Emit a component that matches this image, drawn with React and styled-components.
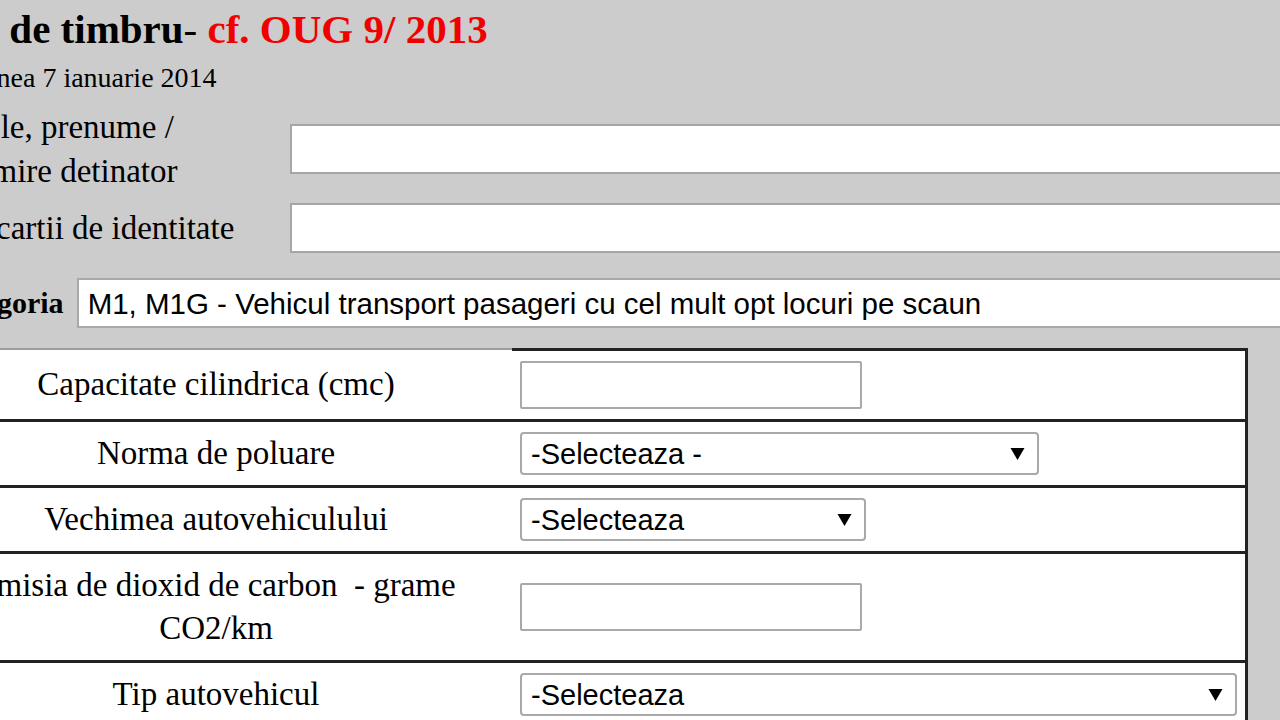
import React from "react";
import styled, { createGlobalStyle } from "styled-components";

const GlobalStyle = createGlobalStyle`
  html, body {
    margin: 0;
    padding: 0;
    background: #cccccc;
    overflow: hidden;
  }
  body {
    font-family: "Liberation Serif", "Times New Roman", serif;
    color: #000;
  }
`;

const Page = styled.div`
  width: 1440px;
  margin-left: -80px;
  padding-top: 6px;
`;

const Title = styled.h1`
  margin: 0 0 0 -6px;
  font-size: 41px;
  line-height: 46px;
  font-weight: bold;
`;

const Dash = styled.span`
  font-weight: normal;
`;

const Red = styled.span`
  color: #f20000;
`;

const Subtitle = styled.div`
  margin-top: 10px;
  padding-left: 5px;
  font-size: 28px;
  line-height: 31px;
`;

const FieldRow = styled.div`
  display: flex;
  align-items: center;
  margin-top: ${(p) => p.$gap}px;
  padding-left: ${(p) => p.$indent || 0}px;
`;

const FieldLabel = styled.label`
  flex: 0 0 370px;
  box-sizing: border-box;
  padding-right: 20px;
  font-size: 33px;
  line-height: 44px;
`;

const BoldLabel = styled.label`
  flex: 0 0 auto;
  margin-right: 13px;
  font-size: 30px;
  font-weight: bold;
  line-height: 44px;
`;

const WideInput = styled.input`
  flex: 1;
  height: 50px;
  box-sizing: border-box;
  border: 2px solid #a6a6a6;
  background: #fff;
  outline: none;
  padding: 0 10px;
  font-family: "Liberation Sans", Arial, sans-serif;
  font-size: 29px;
  color: #000;
`;

const Table = styled.div`
  width: 1328px;
  box-sizing: border-box;
  margin-top: 20px;
  background: #fff;
  border-right: 3px solid #222;
`;

const Row = styled.div`
  display: grid;
  grid-template-columns: 592px 1fr;
  border-bottom: 3px solid #222;
`;

const LabelCell = styled.div`
  padding: 10px 12px;
  text-align: center;
  font-size: 33px;
  line-height: 43px;
  border-top: ${(p) => (p.$first ? "2px solid #9c9c9c" : "none")};
  display: flex;
  align-items: center;
  justify-content: center;
`;

const ControlCell = styled.div`
  display: flex;
  align-items: center;
  padding: 10px 8px;
  border-top: ${(p) => (p.$first ? "3px solid #222" : "none")};
`;

const SmallInput = styled.input`
  width: 342px;
  height: 48px;
  box-sizing: border-box;
  border: 2px solid #a9a9a9;
  border-radius: 2px;
  background: #fff;
  outline: none;
  padding: 0 8px;
  font-family: "Liberation Sans", Arial, sans-serif;
  font-size: 28px;
`;

const SelectWrap = styled.div`
  position: relative;
  width: ${(p) => p.$w}px;
  flex: ${(p) => (p.$grow ? 1 : "0 0 auto")};
`;

const SelectBox = styled.select`
  appearance: none;
  -webkit-appearance: none;
  width: 100%;
  height: ${(p) => p.$h || 43}px;
  box-sizing: border-box;
  border: 2px solid #a9a9a9;
  border-radius: ${(p) => (p.$square ? 0 : 4)}px;
  background: #fff;
  outline: none;
  padding: 0 40px 0 9px;
  font-family: "Liberation Sans", Arial, sans-serif;
  font-size: ${(p) => p.$fs || 29}px;
  color: #000;
`;

const Arrow = styled.svg`
  position: absolute;
  right: 14px;
  top: 50%;
  transform: translateY(-50%);
  pointer-events: none;
`;

function Select({ width, grow, text, height, square, fontSize }) {
  return (
    <SelectWrap $w={width} $grow={grow}>
      <SelectBox $h={height} $square={square} $fs={fontSize} defaultValue="0">
        <option value="0">{text}</option>
      </SelectBox>
      <Arrow width="15" height="14" viewBox="0 0 15 14">
        <polygon points="0.5,1 14.5,1 7.5,13" fill="#000" />
      </Arrow>
    </SelectWrap>
  );
}

const rows = [
  { label: "Capacitate cilindrica (cmc)", kind: "input" },
  { label: "Norma de poluare", kind: "select", text: "-Selecteaza -", w: 519 },
  { label: "Vechimea autovehiculului", kind: "select", text: "-Selecteaza", w: 346 },
  { label: "Emisia de dioxid de carbon\u00a0 - grame CO2/km", kind: "input" },
  { label: "Tip autovehicul", kind: "select", text: "-Selecteaza", w: 717 },
];

export default function App() {
  return (
    <>
      <GlobalStyle />
      <Page>
        <Title>
          Taxa de timbru<Dash>- </Dash>
          <Red>cf. OUG 9/ 2013</Red>
        </Title>
        <Subtitle>Versiunea 7 ianuarie 2014</Subtitle>

        <FieldRow $gap={12}>
          <FieldLabel>Numele, prenume / Denumire detinator</FieldLabel>
          <WideInput type="text" />
        </FieldRow>
        <FieldRow $gap={10}>
          <FieldLabel>Seria cartii de identitate</FieldLabel>
          <WideInput type="text" />
        </FieldRow>
        <FieldRow $gap={25} $indent={17}>
          <BoldLabel>Categoria</BoldLabel>
          <Select
            grow
            height={50}
            square
            fontSize={29.5}
            text="M1, M1G - Vehicul transport pasageri cu cel mult opt locuri pe scaun"
          />
        </FieldRow>

        <Table>
          {rows.map((r, i) => (
            <Row key={r.label}>
              <LabelCell $first={i === 0}>{r.label}</LabelCell>
              <ControlCell $first={i === 0}>
                {r.kind === "input" ? (
                  <SmallInput type="text" />
                ) : (
                  <Select width={r.w} text={r.text} />
                )}
              </ControlCell>
            </Row>
          ))}
        </Table>
      </Page>
    </>
  );
}
